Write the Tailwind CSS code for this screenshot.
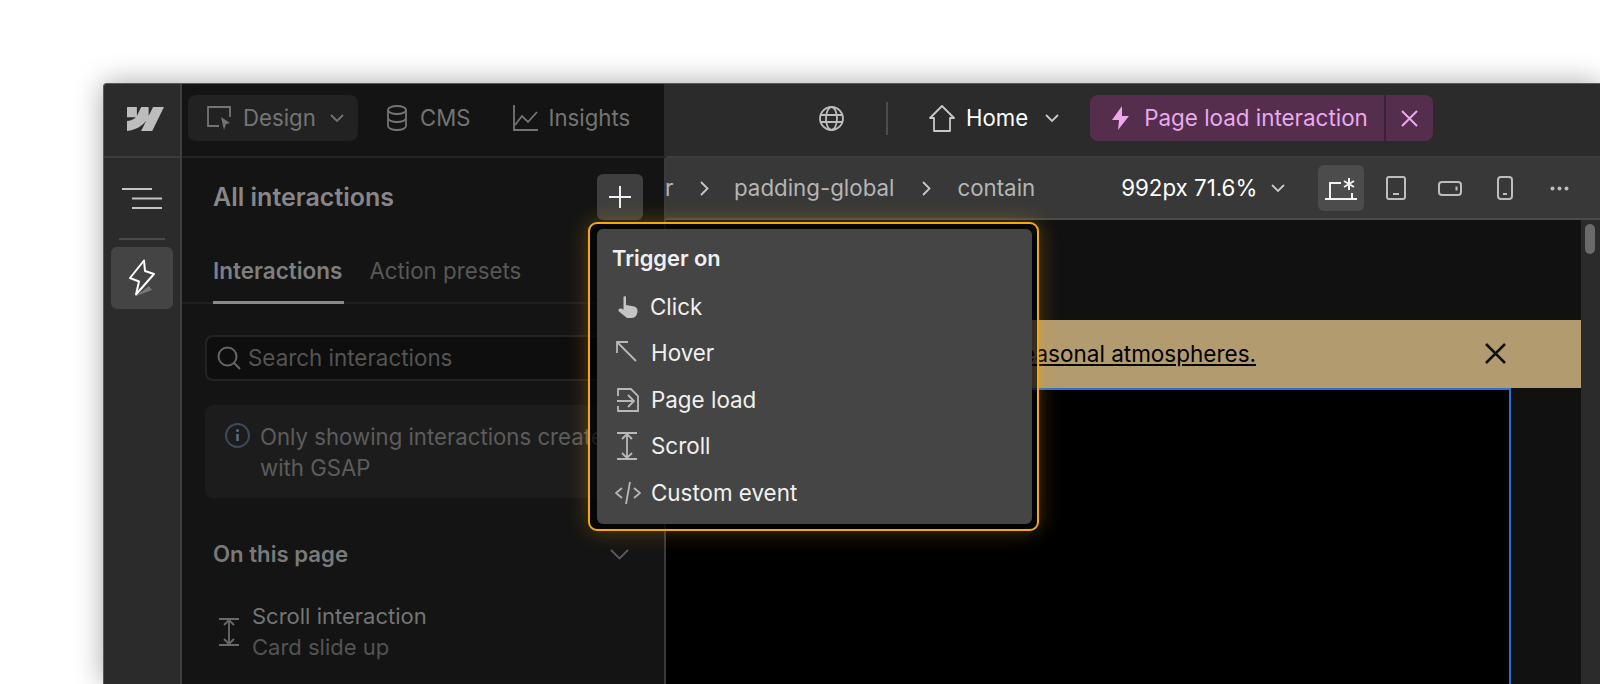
<!DOCTYPE html>
<html lang="en">
<head>
<meta charset="utf-8">
<title>Interactions</title>
<script src="https://cdn.jsdelivr.net/npm/@tailwindcss/browser@4"></script>
</head>
<body class="bg-white overflow-hidden font-['Inter',sans-serif]">
<div class="w-[1600px] h-[684px] pt-[83px] pl-[103px] overflow-hidden">
  <!-- app window -->
  <div class="relative flex h-[601px] rounded-tl-[4px] border-l border-t border-[#5a5a5a] bg-[#2b2b2b] shadow-[0_0_28px_rgba(0,0,0,0.35)] overflow-hidden">

    <!-- rail -->
    <div class="w-[78px] shrink-0 flex flex-col border-r-2 border-[#3f3f3f]">
      <div class="h-[74px] shrink-0 flex items-center justify-center border-b-2 border-[#3d3d3d] pl-[6px] pb-[3px]">
        <svg class="w-[37px] h-[24px] text-[#bdbdbd]" viewBox="0 4.5 24 15" preserveAspectRatio="none" fill="currentColor"><path d="M24 4.515L16.342 19.485H9.149L12.354 13.281H12.21C9.566 16.713 5.621 18.973 0 19.485V13.367C0 13.367 3.596 13.155 5.71 10.932H0V4.515H6.417V9.793L6.561 9.792L9.183 4.515H14.036V9.759L14.18 9.759L16.901 4.515H24Z"/></svg>
      </div>
      <div class="flex flex-col items-center pt-[30px]">
        <svg class="w-[42px] h-[22px] text-[#c4c4c4]" viewBox="0 0 42 22" fill="none" stroke="currentColor" stroke-width="2"><path d="M1 1h30M11 10.5h30M11 20h30"/></svg>
        <div class="w-[46px] h-[2px] bg-[#4a4a4a] mt-[28px]"></div>
        <div class="w-[62px] h-[62px] mt-[7px] rounded-[6px] bg-[#444444] flex items-center justify-center">
          <svg class="w-[28px] h-[38px]" viewBox="0 0 28 38" fill="none"><path d="M16 1.5L2 19l9 3.500-3 13L26 15l-9-3z" stroke="#fff" stroke-width="2" stroke-linejoin="round"/><path d="M8 37l16-6-3-4z" fill="#777"/></svg>
        </div>
      </div>
    </div>

    <!-- dimmed panel column -->
    <div class="w-[484px] shrink-0 flex flex-col">
      <div class="h-[74px] shrink-0 flex items-center pl-[6px] pb-[4px] bg-[#141414] border-b-2 border-r-2 border-b-[#232323] border-r-[#2b2b2b] text-[22.2px] text-[#747474]">
        <div class="w-[170px] h-[46px] rounded-[8px] bg-[#222222] flex items-center pl-[18px]">
          <svg class="w-[26px] h-[26px] shrink-0" viewBox="0 0 26 26" fill="none" stroke="#747474" stroke-width="1.8"><path d="M13 21H2V2h22v10"/><path d="M15 12l9 6-4 1-2 6z" fill="#747474" stroke="none"/></svg>
          <span class="ml-[11px] mt-[1px] leading-none">Design</span>
          <svg class="w-[14px] h-[9px] ml-[14px]" viewBox="0 0 14 9" fill="none" stroke="#747474" stroke-width="1.8"><path d="M1 1l6 6 6-6"/></svg>
        </div>
        <svg class="w-[20px] h-[26px] ml-[29px] shrink-0" viewBox="0 0 20 26" fill="none" stroke="#747474" stroke-width="1.8"><ellipse cx="10" cy="5" rx="9" ry="4"/><path d="M1 5v16c0 2.200 4 4 9 4s9-1.800 9-4V5M1 13c0 2.200 4 4 9 4s9-1.800 9-4"/></svg>
        <span class="ml-[13px] mt-[1px] leading-none">CMS</span>
        <svg class="w-[25px] h-[26px] ml-[42px] shrink-0" viewBox="0 0 25 26" fill="none" stroke="#747474" stroke-width="1.8"><path d="M1 0v25h24M2 20l7-9 6 6 9-10"/></svg>
        <span class="ml-[11px] mt-[1px] leading-none">Insights</span>
      </div>
      <div class="flex flex-col grow bg-[#141414] border-r-2 border-[#3a3a3a]">
        <div class="h-[63px] shrink-0 flex items-center justify-between pl-[31px] pr-[21px] pt-[15px]">
          <span class="text-[25px] font-semibold text-[#878787] leading-none">All interactions</span>
          <div class="w-[46px] h-[46px] rounded-[6px] bg-[#3f3f3f] flex items-center justify-center">
            <svg class="w-[22px] h-[22px]" viewBox="0 0 22 22" stroke="#f0f0f0" stroke-width="2"><path d="M11 0v22M0 11h22"/></svg>
          </div>
        </div>
        <div class="h-[83px] shrink-0 flex items-end pl-[31px] gap-[25px] border-b-2 border-[#1f1f1f]">
          <span class="h-[44px] text-[22.5px] font-semibold text-[#7f7f7f] leading-[22px] border-b-[3px] border-[#8a8a8a] -mb-[2px] pr-[2px]">Interactions</span>
          <span class="h-[44px] text-[22.3px] text-[#585858] leading-[26px]">Action presets</span>
        </div>
        <div class="pl-[23px] pt-[31px]">
          <div class="w-[470px] h-[46px] rounded-[8px] border-2 border-[#232323] bg-[#0e0e0e] flex items-center pl-[10px]">
            <svg class="w-[24px] h-[24px]" viewBox="0 0 24 24" fill="none" stroke="#666" stroke-width="2"><circle cx="10.500" cy="10.500" r="9"/><path d="M17 17l6 6"/></svg>
            <span class="ml-[7px] mt-[1px] text-[22.4px] leading-none text-[#545454]">Search interactions</span>
          </div>
          <div class="w-[470px] h-[93px] mt-[24px] rounded-[8px] bg-[#1c1c1c] flex pl-[20px] pt-[16px]">
            <svg class="w-[25px] h-[25px] shrink-0 mt-[2px]" viewBox="0 0 25 25" fill="none" stroke="#3d4a5e" stroke-width="2"><circle cx="12.500" cy="12.500" r="11.500"/><path d="M12.500 11v7" stroke="#5a6d8a" stroke-width="2.500"/><circle cx="12.500" cy="7.500" r="1.500" fill="#5a6d8a" stroke="none"/></svg>
            <p class="ml-[10px] text-[22.2px] leading-[31px] text-[#5c5c5c] whitespace-nowrap">Only showing interactions created<br>with GSAP</p>
          </div>
        </div>
        <div class="flex items-center justify-between pl-[31px] pr-[35px] mt-[43px] h-[26px]">
          <span class="text-[22.2px] font-semibold text-[#7a7a7a] leading-none">On this page</span>
          <svg class="w-[19px] h-[11px]" viewBox="0 0 19 11" fill="none" stroke="#5a5a5a" stroke-width="1.800"><path d="M1 1l8.500 8.500L18 1"/></svg>
        </div>
        <div class="flex items-center pl-[37px] mt-[34px]">
          <svg class="w-[20px] h-[28px]" viewBox="0 0 20 28" fill="none" stroke="#6a6a6a" stroke-width="1.800"><path d="M0 1h20M0 27h20M10 2v24M5 7l5-5 5 5M5 21l5 5 5-5"/></svg>
          <div class="ml-[13px] text-[22px] leading-[31px]">
            <p class="text-[#757575]">Scroll interaction</p>
            <p class="text-[#535353]">Card slide up</p>
          </div>
        </div>
      </div>
    </div>

    <!-- right side -->
    <div class="grow min-w-0 flex flex-col">
      <div class="h-[74px] shrink-0 flex items-center pb-[4px] border-b-2 border-[#3d3d3d] text-[22.2px]">
        <svg class="w-[25px] h-[25px] ml-[153px]" viewBox="0 0 25 25" fill="none" stroke="#bcbcbc" stroke-width="1.800"><circle cx="12.500" cy="12.500" r="11.500"/><ellipse cx="12.500" cy="12.500" rx="5.500" ry="11.500"/><path d="M1.500 9h22M1.500 16h22"/></svg>
        <div class="w-[2px] h-[33px] bg-[#4d4d4d] ml-[42px]"></div>
        <svg class="w-[26px] h-[27px] ml-[41px]" viewBox="0 0 26 27" fill="none" stroke="#c8c8c8" stroke-width="1.800"><path d="M1 13L13 1l12 12h-4v13H5V13z" stroke-linejoin="round"/></svg>
        <span class="ml-[11px] mt-[1px] text-white leading-none">Home</span>
        <svg class="w-[14px] h-[9px] ml-[17px]" viewBox="0 0 14 9" fill="none" stroke="#c8c8c8" stroke-width="1.800"><path d="M1 1l6 6 6-6"/></svg>
        <div class="ml-[31px] h-[46px] flex rounded-[8px] bg-[#552e4d] text-[#eaa9ea]">
          <div class="w-[296px] flex items-center pl-[22px] border-r-2 border-[#3c2037]">
            <svg class="w-[17px] h-[24px]" viewBox="0 0 17 24" fill="#eaa9ea"><path d="M10 0L0 14h7l-1 10 11-14h-7z"/></svg>
            <span class="ml-[15px] mt-[1px] text-[22.4px] leading-none whitespace-nowrap">Page load interaction</span>
          </div>
          <div class="w-[47px] flex items-center justify-center">
            <svg class="w-[17px] h-[17px]" viewBox="0 0 17 17" stroke="#eaa9ea" stroke-width="2"><path d="M1 1l15 15M16 1L1 16"/></svg>
          </div>
        </div>
      </div>

      <div class="h-[62px] shrink-0 flex items-center bg-[#383838] border-b-2 border-[#4a4a4a] text-[22.3px] text-[#b5b5b5]">
        <span class="w-[9px] -ml-[1px] mt-[1px] leading-none">r</span>
        <svg class="w-[9px] h-[15px] ml-[26px] shrink-0" viewBox="0 0 9 15" fill="none" stroke="#c8c8c8" stroke-width="1.800"><path d="M1 1l6.500 6.500L1 14"/></svg>
        <span class="ml-[25px] mt-[1px] leading-none">padding-global</span>
        <svg class="w-[9px] h-[15px] ml-[28px] shrink-0" viewBox="0 0 9 15" fill="none" stroke="#c8c8c8" stroke-width="1.800"><path d="M1 1l6.500 6.500L1 14"/></svg>
        <span class="ml-[26px] mt-[1px] leading-none">contain</span>
        <span class="ml-[86px] mt-[1px] text-white leading-none whitespace-nowrap">992px 71.6%</span>
        <svg class="w-[14px] h-[9px] ml-[14px]" viewBox="0 0 14 9" fill="none" stroke="#c8c8c8" stroke-width="1.800"><path d="M1 1l6 6 6-6"/></svg>
        <div class="w-[46px] h-[46px] ml-[33px] shrink-0 rounded-[6px] bg-[#4c4c4c] flex items-center justify-center">
          <svg class="w-[32px] h-[23px]" viewBox="0 0 32 23" fill="none" stroke="#f2f2f2" stroke-width="2"><path d="M16 6H5v16M0 22h32M27 16v6M24 1v12M19 4l10 6M29 4L19 10"/></svg>
        </div>
        <svg class="w-[20px] h-[24px] ml-[22px] shrink-0" viewBox="0 0 20 24" fill="none" stroke="#bdbdbd" stroke-width="2"><rect x="1" y="1" width="18" height="22" rx="2"/><path d="M7 18h6"/></svg>
        <svg class="w-[24px] h-[15px] ml-[32px] shrink-0" viewBox="0 0 24 15" fill="none" stroke="#bdbdbd" stroke-width="2"><rect x="1" y="1" width="22" height="13" rx="3"/><path d="M18.500 5.500v4"/></svg>
        <svg class="w-[16px] h-[24px] ml-[35px] shrink-0" viewBox="0 0 16 24" fill="none" stroke="#bdbdbd" stroke-width="2"><rect x="1" y="1" width="14" height="22" rx="3"/><path d="M6 18h4"/></svg>
        <svg class="w-[19px] h-[5px] ml-[37px] shrink-0" viewBox="0 0 19 5" fill="#bdbdbd"><circle cx="2.500" cy="2.500" r="2"/><circle cx="9.500" cy="2.500" r="2"/><circle cx="16.500" cy="2.500" r="2"/></svg>
      </div>

      <!-- canvas -->
      <div class="grow flex min-h-0">
        <div class="grow min-w-0 bg-[#111111] flex flex-col">
          <div class="h-[100px] shrink-0"></div>
          <div class="h-[68px] shrink-0 bg-[#b29b6e] flex items-center justify-end pr-[325px] relative text-[22.5px] text-black">
            <span class="underline leading-none whitespace-nowrap">seasonal atmospheres.</span>
            <svg class="absolute right-[75px] top-[23px] w-[21px] h-[21px]" viewBox="0 0 21 21" stroke="#111" stroke-width="2.500"><path d="M1 1l19 19M20 1L1 20"/></svg>
          </div>
          <div class="grow mr-[70px] bg-black border-t-2 border-r-2 border-[#2f6fd0]"></div>
        </div>
        <div class="w-[19px] shrink-0 bg-[#2b2b2b] pt-[4px] pl-[4px]">
          <div class="w-[10px] h-[30px] rounded-full bg-[#6a6a6a]"></div>
        </div>
      </div>
    </div>

    <!-- trigger menu, highlighted -->
    <div class="absolute left-[484px] top-[138px] w-[451px] h-[309px] rounded-[9px] border-2 border-[#f4a90f] bg-black/70 pt-[5px] pb-[5px] pl-[7px] pr-[5px] shadow-[0_0_22px_rgba(244,169,15,0.3)]">
      <div class="h-full rounded-[6px] bg-[#454545] pt-[19px] pl-[15px] text-[22.4px] text-[#f0f0f0]">
        <p class="font-semibold leading-none text-[21.8px] h-[26px]">Trigger on</p>
        <div class="flex items-center h-[46px] mt-[10px] ml-[1px]">
          <svg class="w-[20px] h-[22px] shrink-0 ml-[5px]" viewBox="0 0 20 22" fill="#c4c4c4" stroke="none"><path d="M5.500 1c0-1 2.500-1 2.500 0v8l7 1.200c3 .5 4.500 2 4.500 4.300 0 4-2 7.500-6 7.500H9L1 15.500c-1-1-.5-2.500 1-3 1-.3 2.500 .3 3.500 1.200z"/></svg>
          <span class="ml-[12px] leading-none">Click</span>
        </div>
        <div class="flex items-center h-[46.500px] ml-[1px]">
          <svg class="w-[22px] h-[22px] shrink-0 ml-[3px] -mt-[2px]" viewBox="0 0 22 22" fill="none" stroke="#b8b8b8" stroke-width="1.800"><path d="M1 12V1h11M1 1l19 19"/></svg>
          <span class="ml-[13px] leading-none">Hover</span>
        </div>
        <div class="flex items-center h-[46.500px] ml-[1px]">
          <svg class="w-[22px] h-[24px] shrink-0 ml-[4px]" viewBox="0 0 22 24" fill="none" stroke="#b8b8b8" stroke-width="1.800"><path d="M1 8V1h13l7 7v15H1v-5"/><path d="M0 13h17M11 7l6 6-6 6"/></svg>
          <span class="ml-[12px] leading-none">Page load</span>
        </div>
        <div class="flex items-center h-[46.500px] ml-[1px]">
          <svg class="w-[20px] h-[28px] shrink-0 ml-[4px]" viewBox="0 0 20 28" fill="none" stroke="#b8b8b8" stroke-width="1.800"><path d="M0 1h20M0 27h20M10 2v24M5 7l5-5 5 5M5 21l5 5 5-5"/></svg>
          <span class="ml-[14px] leading-none">Scroll</span>
        </div>
        <div class="flex items-center h-[46.500px] ml-[3px]">
          <svg class="w-[26px] h-[24px] shrink-0" viewBox="0 0 26 24" fill="none" stroke="#b8b8b8" stroke-width="1.800"><path d="M7 7l-6 5 6 5M19 7l6 5-6 5M15 1l-4 22"/></svg>
          <span class="ml-[10px] leading-none">Custom event</span>
        </div>
      </div>
    </div>
  </div>
</div>
</body>
</html>
